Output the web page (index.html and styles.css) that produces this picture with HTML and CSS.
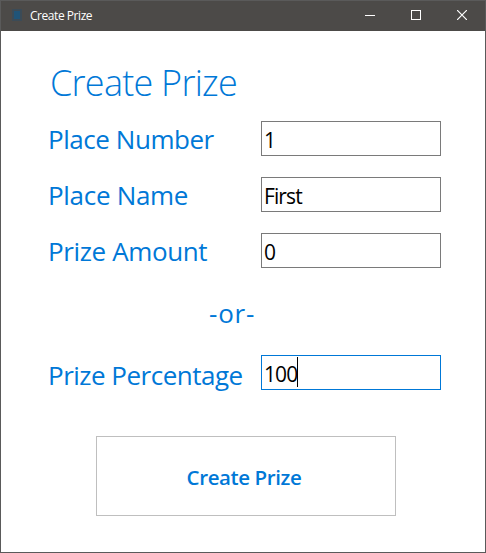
FILE: index.html
```html
<!DOCTYPE html>
<html lang="en">
<head>
<meta charset="utf-8">
<title>Create Prize</title>
<link rel="stylesheet" href="styles.css">
</head>
<body>
<div class="window">
  <header class="titlebar">
    <svg class="app-icon" width="10" height="12" viewBox="0 0 10 12"><path fill="#3b4b57" d="M0 0h10v12H0z"/><path fill="#205478" d="M2 2h6v8H2z"/></svg>
    <span class="title">Create Prize</span>
    <div class="controls">
      <svg width="10" height="10" viewBox="0 0 10 10" shape-rendering="crispEdges"><path fill="#fff" d="M0 5h10v1H0z"/></svg>
      <svg width="10" height="10" viewBox="0 0 10 10" shape-rendering="crispEdges"><path fill="none" stroke="#fff" d="M.5.5h9v9h-9z"/></svg>
      <svg width="10" height="10" viewBox="0 0 10 10"><path fill="none" stroke="#fff" stroke-width="1.2" d="M0 0l10 10M10 0L0 10"/></svg>
    </div>
  </header>
  <main class="form">
    <h1 class="heading">Create Prize</h1>
    <div class="row"><label class="label number">Place Number</label><div class="field">1</div></div>
    <div class="row"><label class="label name">Place Name</label><div class="field first">First</div></div>
    <div class="row"><label class="label amount">Prize Amount</label><div class="field">0</div></div>
    <div class="or">-or-</div>
    <div class="row"><label class="label percentage">Prize Percentage</label><div class="field focused">100<span class="caret"></span></div></div>
    <button class="submit">Create Prize</button>
  </main>
</div>
</body>
</html>
```
FILE: styles.css
```css
* { box-sizing: border-box; }
body { margin: 0; font-family: "Open Sans", "Noto Sans", sans-serif; }
.window { width: 486px; height: 553px; border: 1px solid #5a5a5a; background: #fff; }
.titlebar { height: 30px; display: flex; align-items: center; background: #4c4a48; color: #fff; padding: 0 18px 2px 11px; }
.app-icon { margin-right: 8px; }
.title { font-size: 12px; line-height: 16px; letter-spacing: -0.45px; position: relative; top: 1px; }
.controls { margin-left: auto; display: flex; gap: 36px; }
.controls svg { display: block; }
.form { color: #0078d7; padding: 27px 44px 0 47px; display: flex; flex-direction: column; }
.heading { margin: 0 0 13px 2px; height: 50px; line-height: 50px; font-size: 36px; font-weight: 300; letter-spacing: -0.75px; }
.row { height: 35px; display: flex; justify-content: space-between; margin-bottom: 21px; }
.label { font-size: 26px; line-height: 37px; white-space: nowrap; }
.number { letter-spacing: -0.45px; }
.name { letter-spacing: -0.3px; }
.amount { letter-spacing: -0.37px; }
.percentage { letter-spacing: -0.5px; line-height: 41px; }
.field { width: 180px; height: 35px; border: 1px solid #7a7a7a; color: #000; font-size: 21px; line-height: 36px; padding-left: 2px; letter-spacing: -0.9px; display: flex; }
.focused { border-color: #0078d7; }
.caret { width: 1px; height: 30px; margin-top: 1px; background: #000; }
.or { height: 36px; margin: 7px 0 23px 161px; font-size: 26px; line-height: 35px; letter-spacing: 0.8px; }
.submit { width: 300px; height: 80px; margin: 25px 0 0 48px; padding: 2px 4px 0 0; border: 1px solid #bfbfbf; background: #fff; color: #0078d7; font: 600 20.5px/28px "Open Sans", "Noto Sans", sans-serif; letter-spacing: -0.4px; }
```
